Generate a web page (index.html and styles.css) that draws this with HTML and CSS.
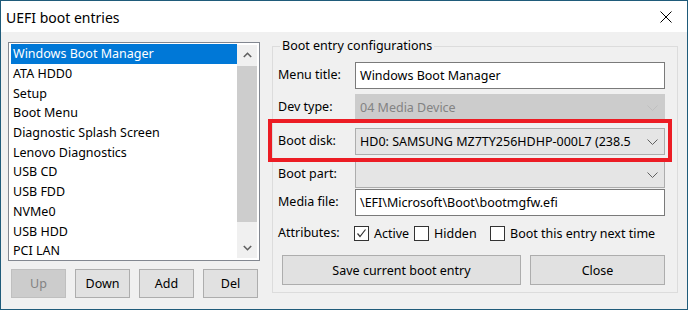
FILE: index.html
```html
<!DOCTYPE html>
<html lang="en">
  <head>
    <meta charset="UTF-8" />
    <meta name="viewport" content="width=device-width, initial-scale=1.0" />
    <title>UEFI boot entries</title>
    <link rel="stylesheet" href="styles.css">
  </head>
  <body>
    <div class="window">
      <div class="titlebar">
        <span class="title">UEFI boot entries</span>
        <svg class="close" width="12" height="12" viewBox="0 0 12 12">
          <path d="M0.5 0.5L11.5 11.5M11.5 0.5L0.5 11.5" stroke="#000" stroke-width="1" fill="none" />
        </svg>
      </div>

      <div class="dialog">
        <div class="entries">
          <div class="listbox">
            <ul class="items">
              <li class="selected">Windows Boot Manager</li>
              <li>ATA HDD0</li>
              <li>Setup</li>
              <li>Boot Menu</li>
              <li>Diagnostic Splash Screen</li>
              <li>Lenovo Diagnostics</li>
              <li>USB CD</li>
              <li>USB FDD</li>
              <li>NVMe0</li>
              <li>USB HDD</li>
              <li>PCI LAN</li>
            </ul>
            <div class="scrollbar">
              <span class="arrow">
                <svg width="9" height="6" viewBox="0 0 9 6"><path d="M0.8 5L4.5 1.3L8.2 5" stroke="#606060" stroke-width="1.6" fill="none" /></svg>
              </span>
              <span class="track"><span class="thumb"></span></span>
              <span class="arrow">
                <svg width="9" height="6" viewBox="0 0 9 6"><path d="M0.8 1L4.5 4.7L8.2 1" stroke="#606060" stroke-width="1.6" fill="none" /></svg>
              </span>
            </div>
          </div>

          <div class="list-buttons">
            <button class="btn" disabled>Up</button>
            <button class="btn">Down</button>
            <button class="btn">Add</button>
            <button class="btn">Del</button>
          </div>
        </div>

        <fieldset class="config">
          <legend>Boot entry configurations</legend>

          <div class="fields">
            <span class="label">Menu title:</span>
            <div class="textbox">Windows Boot Manager</div>

            <span class="label">Dev type:</span>
            <div class="combo disabled">
              <span>04 Media Device</span>
              <svg width="11" height="6" viewBox="0 0 11 6"><path d="M0.5 0.5L5.5 5.5L10.5 0.5" stroke="#bfbfbf" fill="none" /></svg>
            </div>

            <span class="label">Boot disk:</span>
            <div class="combo highlight">
              <span>HD0: SAMSUNG MZ7TY256HDHP-000L7 (238.5</span>
              <svg width="11" height="6" viewBox="0 0 11 6"><path d="M0.5 0.5L5.5 5.5L10.5 0.5" stroke="#606060" fill="none" /></svg>
            </div>

            <span class="label">Boot part:</span>
            <div class="combo">
              <span></span>
              <svg width="11" height="6" viewBox="0 0 11 6"><path d="M0.5 0.5L5.5 5.5L10.5 0.5" stroke="#606060" fill="none" /></svg>
            </div>

            <span class="label">Media file:</span>
            <div class="textbox">\EFI\Microsoft\Boot\bootmgfw.efi</div>
          </div>

          <div class="attributes">
            <span class="label">Attributes:</span>
            <label class="check active">
              <span class="box">
                <svg width="11" height="11" viewBox="0 0 11 11"><path d="M1.5 5.5L4 8.5L9.5 1.5" stroke="#333" stroke-width="1.2" fill="none" /></svg>
              </span>
              Active
            </label>
            <label class="check hidden-opt">
              <span class="box"></span>
              Hidden
            </label>
            <label class="check">
              <span class="box"></span>
              Boot this entry next time
            </label>
          </div>

          <div class="actions">
            <button class="btn save">Save current boot entry</button>
            <button class="btn close-btn">Close</button>
          </div>
        </fieldset>
      </div>
    </div>
  </body>
</html>
```

FILE: styles.css
```css
:root {
  --frame: #1f5b7a;
  --face: #f0f0f0;
  --button: #e1e1e1;
  --button-border: #adadad;
  --field-border: #7a7a7a;
  --select-blue: #0078d7;
  --group-border: #dcdcdc;
  --marker: #ec1c24;
  --ui: 12.5px;
}
body {
  margin: 0;
  font-family: "Noto Sans", "Open Sans", sans-serif;
  font-size: var(--ui);
  color: #000;
}
.window {
  width: 688px;
  height: 310px;
  box-sizing: border-box;
  border: 1px solid var(--frame);
  display: flex;
  flex-direction: column;
  background-color: var(--face);
}
.titlebar {
  height: 31px;
  flex-shrink: 0;
  background-color: #fff;
  display: flex;
  align-items: center;
  justify-content: space-between;
  padding: 0 15px 0 5px;
}
.title {
  font-size: 14px;
  margin-top: 1px;
}
.close {
  margin-top: 1px;
}
.dialog {
  display: flex;
  align-items: flex-start;
  gap: 12px;
  padding: 10px 10px 0 7px;
}

/* left side: entries list */
.entries {
  width: 252px;
  flex-shrink: 0;
}
.listbox {
  height: 219px;
  box-sizing: border-box;
  border: 1px solid #828790;
  background-color: #fff;
  padding: 0 2px 0 2px;
  display: flex;
}
.items {
  list-style: none;
  margin: 0;
  padding: 0;
  flex: 1;
  overflow: hidden;
}
.items li {
  height: 19.7px;
  line-height: 19.7px;
  padding-left: 2px;
  white-space: nowrap;
}
.items li.selected {
  margin-top: 1px;
  height: 20px;
  line-height: 20px;
  background-color: var(--select-blue);
  color: #fff;
}
.scrollbar {
  width: 20px;
  margin: 2px 0;
  background-color: var(--face);
  display: flex;
  flex-direction: column;
}
.arrow {
  height: 20px;
  display: flex;
  align-items: center;
  justify-content: center;
}
.track {
  flex: 1;
  padding: 1px 0;
  display: flex;
}
.thumb {
  width: 100%;
  height: 156px;
  background-color: #cdcdcd;
}
.list-buttons {
  display: flex;
  gap: 9px;
  margin-top: 8px;
  padding-left: 3px;
}
.btn {
  font-family: inherit;
  font-size: var(--ui);
  color: #000;
  background-color: var(--button);
  border: 1px solid var(--button-border);
  height: 29px;
  width: 55px;
  padding: 0;
  border-radius: 0;
}
.btn:disabled {
  background-color: #cccccc;
  border-color: #bfbfbf;
  color: #838383;
}

/* right side: group box */
.config {
  width: 406px;
  box-sizing: border-box;
  margin: -5px 0 0 0;
  border: 1px solid var(--group-border);
  padding: 0 12px 7px 5px;
}
.config legend {
  padding: 0 2px;
  margin-left: 2px;
  line-height: 18px;
}
.fields {
  display: grid;
  grid-template-columns: 77px 310px;
  grid-template-rows: 32px 34px 33px 28px 26px;
  align-items: start;
  margin-top: 7px;
}
.label {
  line-height: 26px;
  white-space: nowrap;
}
.textbox,
.combo {
  height: 27px;
  box-sizing: border-box;
  line-height: 25px;
  padding: 0 4px;
  white-space: nowrap;
  overflow: hidden;
}
.textbox {
  background-color: #fff;
  border: 1px solid var(--field-border);
}
.combo {
  background-color: #e5e5e5;
  border: 1px solid var(--button-border);
  display: flex;
  align-items: center;
  justify-content: space-between;
  padding-right: 6px;
}
.combo span {
  overflow: hidden;
}
.combo svg {
  flex-shrink: 0;
  margin-left: 6px;
}
.combo.disabled {
  background-color: #cccccc;
  border-color: #cccccc;
  color: #838383;
}
.highlight {
  position: relative;
  overflow: visible;
}
.highlight::after {
  content: "";
  position: absolute;
  left: -88px;
  right: -8px;
  top: -10px;
  bottom: -8px;
  border: 4px solid var(--marker);
}
.attributes {
  display: flex;
  align-items: center;
  margin-top: 9px;
  height: 18px;
}
.attributes .label {
  width: 76px;
  line-height: 18px;
}
.check {
  display: flex;
  align-items: center;
  gap: 5px;
  white-space: nowrap;
}
.check.active {
  width: 60px;
}
.check.hidden-opt {
  width: 76px;
}
.box {
  width: 13px;
  height: 13px;
  border: 1px solid #333;
  background-color: #fff;
  display: flex;
  align-items: center;
  justify-content: center;
}
.actions {
  display: flex;
  gap: 9px;
  margin: 13px 0 0 4px;
}
.btn.save {
  width: 239px;
  height: 30px;
}
.btn.close-btn {
  width: 135px;
  height: 30px;
}
```
